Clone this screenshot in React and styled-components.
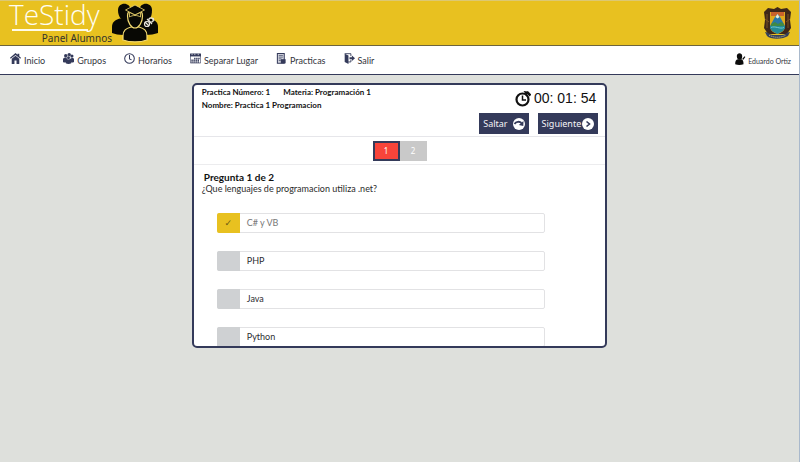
import React, { useState } from "react";
import styled, { createGlobalStyle, css } from "styled-components";

const navy = "#343a5a";
const sans = '"Noto Sans", "Open Sans", sans-serif';
const humanist = 'Lato, "Open Sans", sans-serif';

const Global = createGlobalStyle`
  * { box-sizing: border-box; }
  body { margin: 0; background: #dee0dc; color: #222; font-family: ${humanist}; }
  button, input { font: inherit; }
`;

const Page = styled.div`
  min-height: 100vh;
  border-top: 1px solid #dcc873;
  border-right: 1px solid #a9b9cc;
`;

const Header = styled.header`
  display: flex;
  align-items: center;
  height: 45px;
  padding: 0 8px 0 9px;
  background: #e8c120;
  border-bottom: 1px solid #6d643c;
`;

const Brand = styled.div`
  width: 103px;
  height: 44px;
`;

const Logo = styled.h1`
  height: 30px;
  margin: 0;
  background: linear-gradient(#fffbe8, #fffbe8) 3px 100% / 76px 2px no-repeat;
  color: #fffdf2;
  font: 300 28px/26px "Open Sans", sans-serif;
  white-space: nowrap;
`;

const Tagline = styled.p`
  margin: 0;
  color: #33332c;
  font: 10px/14px ${sans};
  text-align: right;
  white-space: nowrap;
`;

const Grads = styled.svg`
  width: 46px;
  height: 40px;
`;

const Crest = styled.svg`
  width: 27px;
  height: 34px;
  margin-left: auto;
`;

const Nav = styled.nav`
  display: flex;
  align-items: center;
  gap: 18px;
  height: 29px;
  padding: 0 8px 0 10px;
  background: #fff;
  border-bottom: 1px solid ${navy};
`;

const NavLink = styled.a`
  display: flex;
  gap: 3px;
  color: #33343c;
  font: 9px/14px ${humanist};
  text-decoration: none;
  white-space: nowrap;

  svg { width: 11px; height: 11px; color: ${navy}; }
  span { padding-top: 1px; }
`;

const UserLink = styled(NavLink)`
  margin-left: auto;
  gap: 2px;
  font-size: 7px;
  svg { color: #0c0c0c; height: 12px; }
`;

const Card = styled.main`
  width: 52%;
  height: calc(100vh - 197px);
  min-height: 160px;
  margin: 8px auto;
  overflow: hidden;
  background: #fff;
  border: 2px solid ${navy};
  border-radius: 5px;
`;

const Top = styled.section`
  display: flex;
  justify-content: space-between;
  height: 52px;
  padding: 1px 7px 2px 8px;
  border-bottom: 1px solid #e6e6ea;
`;

const Facts = styled.div`
  display: grid;
  grid-template-columns: auto auto;
  align-content: start;
  column-gap: 13px;
  color: #111;
  font: 700 8px/13px ${humanist};
  white-space: nowrap;
`;

const Fact = styled.span`
  grid-column: ${(p) => (p.$wide ? "1 / -1" : "auto")};
`;

const Side = styled.div`
  display: flex;
  flex-direction: column;
  align-items: flex-end;
  gap: 3px;
`;

const Timer = styled.div`
  display: flex;
  align-items: center;
  gap: 3px;
  padding-right: 2px;
  color: #111;
  font: 14px/24px "Liberation Sans", sans-serif;
  white-space: nowrap;

  svg { width: 16px; height: 17px; }
`;

const Actions = styled.div`
  display: flex;
  gap: 9px;
`;

const Action = styled.button`
  display: flex;
  align-items: center;
  gap: ${(p) => p.$gap}px;
  height: 21px;
  padding: 0 4px;
  border: 0;
  background: ${navy};
  color: #f4f4f8;
  font: 9px/20px ${sans};
  white-space: nowrap;

  svg { width: 12px; height: 12px; }
`;

const Pager = styled.nav`
  display: flex;
  justify-content: center;
  padding: 4px 0 3px;
  border-bottom: 1px solid #ececee;
`;

const PageButton = styled.button`
  width: 27px;
  height: 20px;
  padding: 0;
  border: 0;
  background: #c9c9c9;
  color: #fff;
  font: 8px/16px ${sans};

  ${(p) =>
    p.$current &&
    css`
      border: 2px solid ${navy};
      background: #f8443a;
    `}
`;

const Question = styled.section`
  padding: 6px 8px;
`;

const Heading = styled.h2`
  margin: 0 2px;
  color: #111;
  font: 700 10px/12px ${humanist};
`;

const Prompt = styled.p`
  margin: 0 0 18px;
  color: #2b2b2b;
  font: 9px/12px ${humanist};
`;

const Options = styled.div`
  display: grid;
  gap: 18px;
  width: 83%;
  margin-left: 15px;
`;

const Option = styled.label`
  display: flex;
  align-items: center;
  height: 20px;
  border: 1px solid #e2e2e4;
  border-radius: 2px;
  color: ${(p) => (p.$checked ? "#777" : "#2d2d31")};
  font: 9px/18px ${humanist};
`;

const Tick = styled.input`
  appearance: none;
  display: grid;
  place-items: center;
  width: 23px;
  height: 20px;
  margin: 0 7px 0 -1px;
  border-radius: 2px 0 0 2px;
  background: #cfd1d3;

  &:checked { background: #e8c120; }
  &:checked::before {
    content: "✓";
    color: #6b5b14;
    font: 9px/18px "DejaVu Sans", sans-serif;
  }
`;

const HomeIcon = () => (
  <svg viewBox="0 0 16 16" fill="currentColor" aria-hidden="true">
    <path d="M8 0 0 7l1 1.500L8 3l7 5.500L16 7l-2.500-2.200V1H11v1.600z" />
    <path d="M8 4 2.500 8.500V16H6.500V11h3v5h4V8.500z" />
  </svg>
);

const GroupIcon = () => (
  <svg viewBox="0 0 16 16" fill="currentColor" aria-hidden="true">
    <circle cx="4" cy="4" r="2.500" />
    <circle cx="9" cy="2.500" r="2.500" />
    <circle cx="13" cy="4.500" r="2.300" />
    <path d="M0 13V9c0-3 7-3 8-1s7-3 8 1v4c-2 1-3 1-4 .500V15c-2 1.300-6 1.300-8 0v-1.500c-1 .500-3 .500-4-.500z" />
    <circle cx="8" cy="7" r="2.500" stroke="#fff" strokeWidth=".6" />
  </svg>
);

const ClockIcon = () => (
  <svg viewBox="0 0 16 16" fill="none" stroke="currentColor" strokeWidth="1.500" aria-hidden="true">
    <circle cx="8" cy="8" r="7" />
    <path d="M8 3v5.500l3 1.500" />
  </svg>
);

const CalendarIcon = () => (
  <svg viewBox="0 0 16 16" aria-hidden="true">
    <path fill="none" stroke="currentColor" d="M.5 1.500h15v13H.5z" />
    <path fill="currentColor" d="M0 1h16v4H0z" />
    <path stroke="currentColor" strokeWidth="2" strokeDasharray="2 1" d="M6 8h8M2 10.500h12M2 13h12" />
    <path stroke="#fff" d="M3 1v2M7 1v2M12 1v2" />
  </svg>
);

const DocumentIcon = () => (
  <svg viewBox="0 0 16 16" aria-hidden="true">
    <path fill="#d5d7e0" stroke="currentColor" strokeWidth="1.500" d="M2 .8h10v14H2z" />
    <path stroke="currentColor" d="M4 3.500h6M4 6h6M4 8.500h4M4 11h3" />
    <path fill="currentColor" d="M7 9h7v6H7z" />
  </svg>
);

const ExitIcon = () => (
  <svg viewBox="0 0 16 16" aria-hidden="true">
    <path fill="none" stroke="currentColor" strokeWidth="1.300" d="M1 1h9v3.500M10 10v3H6" />
    <path fill="currentColor" d="m1 1 5.500 2.500V16L1 13zM8 6h3.500V3.500L16 7.500l-4.500 4V9H8z" />
  </svg>
);

const UserIcon = () => (
  <svg viewBox="0 0 16 18" fill="currentColor" aria-hidden="true">
    <path d="M2.500 4.500c0-5.500 8-5.500 8 0S8.500 10 6.500 10s-4-1-4-5.500z" />
    <path d="M0 17c0-5 1-7 4-7.500h5.500c2 .5 3 2.500 3 7.500-4 1.300-8.500 1.300-12.500 0z" />
    <path d="m10.500 9 3.500-4 1.300 1-3 4z" />
  </svg>
);

const GradsIcon = () => (
  <Grads viewBox="0 0 46 40" role="img" aria-label="Alumnos">
    <g fill="#080804">
      <path d="M0 30v-6c0-5 3-7 8-8.500h8c5 1 7 3 7 8.500v6c-7 2.500-17 2.500-23 0z" />
      <path d="M6 7c0-8.500 12.500-8.500 12.500 0S15 17 12.300 17 6 14 6 7z" />
      <path d="M23 30v-6c0-5 3-7 7-8.500h8c5 1.500 8 3.500 8 8.500v6c-7 2.500-17 2.500-23 0z" />
      <path d="M27.500 7C27.500-1.500 40 -1.500 40 7s-3.500 10-6.200 10S27.500 14 27.500 7z" />
      <g stroke="#f5dc72" strokeWidth="1.200">
        <path d="M11 37v-4c0-6 3-7.500 8-9h8c5 1.500 8 3 8 9v4c-7 2.500-17 2.500-24 0z" />
        <path d="M15.500 13c0-10 15-10 15 0 0 7-4 12-7.500 12s-7.500-5-7.500-12z" />
        <path d="m13.500 7 9.500-5 9.500 5-9.500 5z" strokeWidth=".8" />
        <path d="M17.500 9.500v4.500c3-2 8-2 11 0V9.500L23 12z" strokeWidth=".8" />
      </g>
    </g>
    <g fill="none" stroke="#e8e5dc" strokeWidth="1.200">
      <circle cx="39" cy="17" r="2.200" />
      <circle cx="35" cy="21" r="2.500" />
      <path d="m35 16 5 5M41 15l1 3M33 19l4 4" />
    </g>
  </Grads>
);

const CrestIcon = () => (
  <Crest viewBox="0 0 27 34" role="img" aria-label="Escudo">
    <path d="M0 6 4 2l6 1 3.500-2L17 3l6-1 4 4-1 8 1 8-4 6H4l-4-6 1-8z" fill="#3e2719" />
    <path d="M3 8v14M24 8v14M1 13l4 3M26 13l-4 3" stroke="#7a5225" />
    <path d="M6 6h15v14c0 5-4 7-7.500 8C10 27 6 25 6 20z" fill="#e0a91c" />
    <path d="M7 6h13v4H7z" fill="#c9622b" />
    <path d="m6 20 5-9 2.500-3L16 11l5 9v3H6z" fill="#2778a8" />
    <path d="m11.500 11 2-3 2 3-2 1.500z" fill="#e8edda" />
    <path d="m7 18 4-2 3 2 3-2 3 2v3H7z" fill="#3f8a45" />
    <path d="M6 20h15c0 5-4 6-7.500 8C10 26 6 25 6 20z" fill="#238a94" />
    <path d="M7 21.500c4-2 9 2 13 0" fill="none" stroke="#6fc6ce" />
    <path d="M1 26c4 0 4 3 8 3h9c4 0 4-3 8-3l-2 4c-4 3-17 4-21 0z" fill="#34415b" />
    <path d="M5 29c5 3 12 3 17 0" fill="none" stroke="#d5c890" strokeDasharray="1 1" />
  </Crest>
);

const StopwatchIcon = () => (
  <svg viewBox="0 0 16 17" fill="none" stroke="currentColor" aria-hidden="true">
    <circle cx="7.500" cy="9.500" r="6" strokeWidth="2.200" />
    <path d="M7.500 5.500V10H11" strokeWidth="1.500" />
    <path d="m8.500 1 4.500.500-1.500 4z" fill="currentColor" stroke="none" />
    <path d="m12 2 3.500 3.500" strokeWidth="2.500" />
  </svg>
);

const SkipIcon = () => (
  <svg viewBox="0 0 12 12" aria-hidden="true">
    <circle cx="6" cy="6" r="6" fill="#fff" />
    <path d="M1.500 6C3 3.500 6.500 3 8.500 5" fill="none" stroke={navy} strokeWidth="1.800" />
    <path d="m10.500 3-.2 5-4.500-1z" fill={navy} />
  </svg>
);

const NextIcon = () => (
  <svg viewBox="0 0 12 12" aria-hidden="true">
    <circle cx="6" cy="6" r="6" fill="#fff" />
    <path d="m4.500 3.500 3 2.500-3 2.500" fill="none" stroke={navy} strokeWidth="1.600" />
  </svg>
);

const links = [
  ["Inicio", HomeIcon],
  ["Grupos", GroupIcon],
  ["Horarios", ClockIcon],
  ["Separar Lugar", CalendarIcon],
  ["Practicas", DocumentIcon],
  ["Salir", ExitIcon],
];

const answers = ["C# y VB", "PHP", "Java", "Python"];

export default function App() {
  const [picked, setPicked] = useState(["C# y VB"]);
  const toggle = (a) =>
    setPicked((list) => (list.includes(a) ? list.filter((x) => x !== a) : [...list, a]));

  return (
    <Page>
      <Global />
      <Header>
        <Brand>
          <Logo>TeStidy</Logo>
          <Tagline>Panel Alumnos</Tagline>
        </Brand>
        <GradsIcon />
        <CrestIcon />
      </Header>
      <Nav>
        {links.map(([label, Icon]) => (
          <NavLink href="#" key={label}>
            <Icon />
            <span>{label}</span>
          </NavLink>
        ))}
        <UserLink href="#">
          <UserIcon />
          <span>Eduardo Ortiz</span>
        </UserLink>
      </Nav>
      <Card>
        <Top>
          <Facts>
            <Fact>Practica Número: 1</Fact>
            <Fact>Materia: Programación 1</Fact>
            <Fact $wide>Nombre: Practica 1 Programacion</Fact>
          </Facts>
          <Side>
            <Timer>
              <StopwatchIcon />
              <span>00: 01: 54</span>
            </Timer>
            <Actions>
              <Action type="button" $gap={5}>
                Saltar <SkipIcon />
              </Action>
              <Action type="button" $gap={1}>
                Siguiente <NextIcon />
              </Action>
            </Actions>
          </Side>
        </Top>
        <Pager aria-label="Preguntas">
          <PageButton type="button" $current>1</PageButton>
          <PageButton type="button">2</PageButton>
        </Pager>
        <Question>
          <Heading>Pregunta 1 de 2</Heading>
          <Prompt>¿Que lenguajes de programacion utiliza .net?</Prompt>
          <Options role="group" aria-label="Respuestas">
            {answers.map((a) => (
              <Option key={a} $checked={picked.includes(a)}>
                <Tick type="checkbox" checked={picked.includes(a)} onChange={() => toggle(a)} />
                {a}
              </Option>
            ))}
          </Options>
        </Question>
      </Card>
    </Page>
  );
}
